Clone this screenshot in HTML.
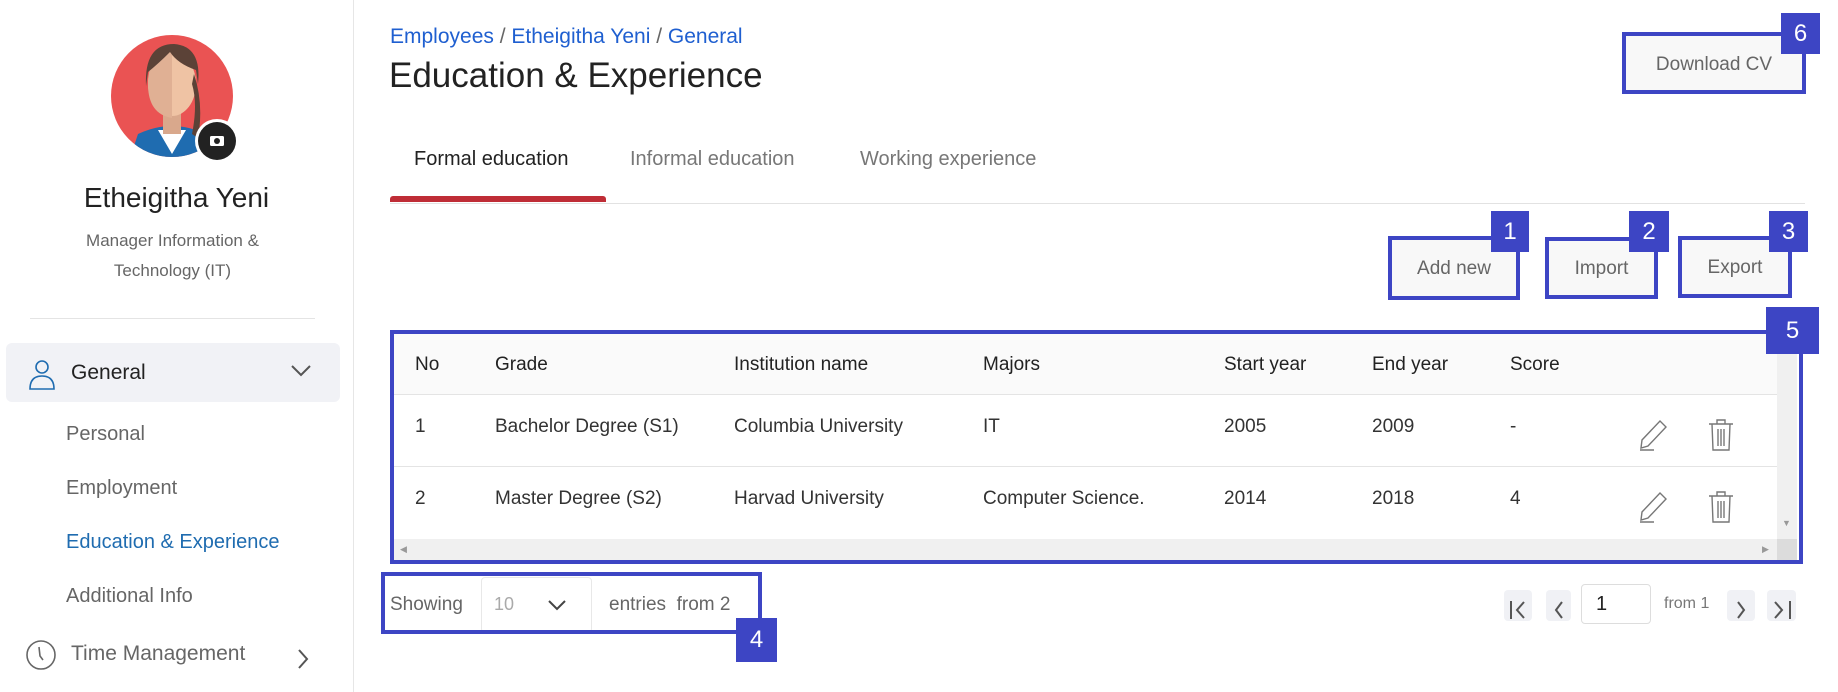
<!DOCTYPE html>
<html><head><meta charset="utf-8"><style>
*{box-sizing:border-box;margin:0;padding:0}
body{width:1838px;height:692px;background:#fff;font-family:"Liberation Sans",sans-serif;position:relative;overflow:hidden;color:#222}
.a{position:absolute;white-space:nowrap}
.box{position:absolute;border:4px solid #3d45c4}
.bd{position:absolute;background:#3d45c4;color:#fff;font-size:24px;text-align:center}
.btn{position:absolute;background:#f8f8f8;color:#666;font-size:19px;text-align:center}
.th{font-size:19px;color:#222;top:354px}
.td{font-size:19px;color:#333}
.nav{font-size:20px;color:#666;left:66px}
.pg{position:absolute;background:#f0f1f5;border-radius:4px}
</style></head><body>
<div class="a" style="left:353px;top:0;width:1px;height:692px;background:#e6e6e6"></div>
<svg class="a" style="left:108px;top:34px" width="140" height="140" viewBox="0 0 140 140">
<circle cx="64" cy="62" r="61" fill="#ea5353"/>
<clipPath id="c"><circle cx="64" cy="62" r="61"/></clipPath>
<g clip-path="url(#c)">
<path d="M20 130 L30 100 Q64 84 98 100 L108 130Z" fill="#1f6cb0"/>
<path d="M50 96 L64 120 L78 96 Z" fill="#fff"/>
<rect x="55" y="78" width="18" height="22" fill="#d9a88c"/>
<ellipse cx="64" cy="50" rx="24" ry="32" fill="#efc3a4"/>
<path d="M40 50 Q40 20 64 18 L64 84 Q40 80 40 50Z" fill="#e0b094"/>
<path d="M38 52 Q36 10 66 10 Q94 12 90 50 L88 36 Q70 30 62 18 Q50 30 40 38Z" fill="#5b4237"/>
<path d="M86 40 Q96 70 90 104 L84 100 Q90 70 84 50Z" fill="#5b4237"/>
</g>
<circle cx="109" cy="107" r="22" fill="#fff"/><circle cx="109" cy="107" r="19" fill="#222"/>
<rect x="102" y="102" width="14" height="10" rx="1.5" fill="#fff"/><circle cx="109" cy="107" r="3" fill="#222"/>
</svg>
<div class="a" style="left:0;width:353px;text-align:center;top:182px;font-size:28px;color:#222">Etheigitha Yeni</div>
<div class="a" style="left:0;width:345px;text-align:center;top:226px;font-size:17px;color:#666;line-height:30px">Manager Information &amp;<br>Technology (IT)</div>
<div class="a" style="left:30px;top:318px;width:285px;height:1px;background:#e4e4e4"></div>
<div class="a" style="left:6px;top:343px;width:334px;height:59px;background:#f1f2f6;border-radius:6px"></div>
<svg class="a" style="left:27px;top:359px" width="30" height="32" viewBox="0 0 30 32" fill="none" stroke="#1f6cb0" stroke-width="1.6"><circle cx="15" cy="8" r="6"/><path d="M3 30 Q3 17 15 17 Q27 17 27 30Z"/></svg>
<div class="a" style="left:71px;top:361px;font-size:21px;color:#222">General</div>
<svg class="a" style="left:290px;top:364px" width="22" height="14"><path d="M2 2 L11 11 L20 2" fill="none" stroke="#555" stroke-width="2"/></svg>
<div class="a nav" style="top:423px">Personal</div>
<div class="a nav" style="top:477px">Employment</div>
<div class="a nav" style="top:531px;color:#1f6cb0">Education &amp; Experience</div>
<div class="a nav" style="top:585px">Additional Info</div>
<svg class="a" style="left:25px;top:639px" width="32" height="32"><circle cx="16" cy="16" r="14" fill="none" stroke="#666" stroke-width="1.6"/><path d="M14 8 L15 17 L18 21" fill="none" stroke="#666" stroke-width="1.6"/></svg>
<div class="a" style="left:71px;top:642px;font-size:21px;color:#666">Time Management</div>
<svg class="a" style="left:296px;top:648px" width="14" height="22"><path d="M3 2 L11 11 L3 20" fill="none" stroke="#555" stroke-width="2"/></svg>
<div class="a" style="left:390px;top:25px;font-size:21px;color:#1f5fd0">Employees <span style="color:#666">/</span> Etheigitha Yeni <span style="color:#666">/</span> General</div>
<div class="a" style="left:389px;top:56px;font-size:35px;color:#222">Education &amp; Experience</div>
<div class="a" style="left:414px;top:148px;font-size:20px;color:#222">Formal education</div>
<div class="a" style="left:630px;top:148px;font-size:20px;color:#777">Informal education</div>
<div class="a" style="left:860px;top:148px;font-size:20px;color:#777">Working experience</div>
<div class="a" style="left:390px;top:203px;width:1415px;height:1px;background:#e2e2e2"></div>
<div class="a" style="left:390px;top:196px;width:216px;height:6px;background:#bf2d36;border-radius:3px 3px 0 0"></div>
<div class="btn" style="left:1622px;top:32px;width:184px;height:62px;line-height:66px">Download CV</div>
<div class="box" style="left:1622px;top:32px;width:184px;height:62px"></div>
<div class="bd" style="left:1781px;top:13px;width:39px;height:41px;line-height:41px">6</div>
<div class="btn" style="left:1388px;top:236px;width:132px;height:64px;line-height:66px">Add new</div>
<div class="box" style="left:1388px;top:236px;width:132px;height:64px"></div>
<div class="bd" style="left:1491px;top:211px;width:38px;height:41px;line-height:41px">1</div>
<div class="btn" style="left:1545px;top:237px;width:113px;height:62px;line-height:64px">Import</div>
<div class="box" style="left:1545px;top:237px;width:113px;height:62px"></div>
<div class="bd" style="left:1629px;top:211px;width:40px;height:41px;line-height:41px">2</div>
<div class="btn" style="left:1678px;top:236px;width:114px;height:62px;line-height:64px">Export</div>
<div class="box" style="left:1678px;top:236px;width:114px;height:62px"></div>
<div class="bd" style="left:1769px;top:211px;width:39px;height:41px;line-height:41px">3</div>
<div class="a" style="left:394px;top:334px;width:1383px;height:61px;background:#fafafa;border-bottom:1px solid #e4e4e4"></div>
<div class="a" style="left:394px;top:466px;width:1383px;height:1px;background:#e4e4e4"></div>
<div class="a th" style="left:415px">No</div><div class="a th" style="left:495px">Grade</div><div class="a th" style="left:734px">Institution name</div><div class="a th" style="left:983px">Majors</div><div class="a th" style="left:1224px">Start year</div><div class="a th" style="left:1372px">End year</div><div class="a th" style="left:1510px">Score</div>
<div class="a td" style="left:415px;top:416px">1</div><div class="a td" style="left:495px;top:416px">Bachelor Degree (S1)</div><div class="a td" style="left:734px;top:416px">Columbia University</div><div class="a td" style="left:983px;top:416px">IT</div><div class="a td" style="left:1224px;top:416px">2005</div><div class="a td" style="left:1372px;top:416px">2009</div><div class="a td" style="left:1510px;top:416px">-</div>
<div class="a td" style="left:415px;top:488px">2</div><div class="a td" style="left:495px;top:488px">Master Degree (S2)</div><div class="a td" style="left:734px;top:488px">Harvad University</div><div class="a td" style="left:983px;top:488px">Computer Science.</div><div class="a td" style="left:1224px;top:488px">2014</div><div class="a td" style="left:1372px;top:488px">2018</div><div class="a td" style="left:1510px;top:488px">4</div>
<svg class="a" style="left:1638px;top:418px" width="32" height="34"><path d="M3 30 L4 22 L22 3 L28 9 L10 28 Z M2 32 L16 32" fill="none" stroke="#777" stroke-width="1.4"/></svg>
<svg class="a" style="left:1706px;top:418px" width="30" height="36"><path d="M3 6 H27 M11 6 V2 H19 V6 M6 6 L7 32 H23 L24 6 M12 11 V28 M15 11 V28 M18 11 V28" fill="none" stroke="#777" stroke-width="1.4"/></svg>
<svg class="a" style="left:1638px;top:490px" width="32" height="34"><path d="M3 30 L4 22 L22 3 L28 9 L10 28 Z M2 32 L16 32" fill="none" stroke="#777" stroke-width="1.4"/></svg>
<svg class="a" style="left:1706px;top:490px" width="30" height="36"><path d="M3 6 H27 M11 6 V2 H19 V6 M6 6 L7 32 H23 L24 6 M12 11 V28 M15 11 V28 M18 11 V28" fill="none" stroke="#777" stroke-width="1.4"/></svg>
<div class="a" style="left:394px;top:539px;width:1383px;height:21px;background:#f0f0f0"></div>
<div class="a" style="left:1777px;top:334px;width:20px;height:226px;background:#f0f0f0"></div>
<div class="a" style="left:1777px;top:539px;width:20px;height:21px;background:#dcdcdc"></div>
<div class="a" style="left:400px;top:544px;font-size:9px;color:#999">◀</div>
<div class="a" style="left:1762px;top:544px;font-size:9px;color:#999">▶</div>
<div class="a" style="left:1782px;top:518px;font-size:9px;color:#999">▼</div>
<div class="box" style="left:390px;top:330px;width:1413px;height:234px"></div>
<div class="bd" style="left:1766px;top:307px;width:53px;height:47px;line-height:47px">5</div>
<div class="a" style="left:390px;top:594px;font-size:19px;color:#666">Showing</div>
<div class="a" style="left:481px;top:577px;width:111px;height:56px;border:1px solid #e8e8e8;border-radius:4px"></div>
<div class="a" style="left:494px;top:594px;font-size:18px;color:#aaa">10</div>
<svg class="a" style="left:547px;top:599px" width="20" height="13"><path d="M2 2 L10 10 L18 2" fill="none" stroke="#444" stroke-width="2"/></svg>
<div class="a" style="left:609px;top:594px;font-size:19px;color:#666">entries&nbsp; from 2</div>
<div class="box" style="left:381px;top:572px;width:381px;height:62px"></div>
<div class="bd" style="left:736px;top:618px;width:41px;height:44px;line-height:44px">4</div>
<div class="pg" style="left:1504px;top:590px;width:28px;height:31px"></div>
<div class="pg" style="left:1546px;top:590px;width:25px;height:31px"></div>
<div class="pg" style="left:1727px;top:590px;width:28px;height:31px"></div>
<div class="pg" style="left:1767px;top:590px;width:29px;height:31px"></div>
<svg class="a" style="left:1508px;top:599px" width="22" height="22"><path d="M3 2 V20 M16 3 L9 11 L16 19" fill="none" stroke="#555" stroke-width="2"/></svg>
<svg class="a" style="left:1550px;top:599px" width="18" height="22"><path d="M12 3 L6 11 L12 19" fill="none" stroke="#555" stroke-width="2"/></svg>
<div class="a" style="left:1581px;top:584px;width:70px;height:40px;border:1px solid #ddd;border-radius:4px;background:#fff"></div>
<div class="a" style="left:1596px;top:593px;font-size:20px;color:#222">1</div>
<div class="a" style="left:1664px;top:595px;font-size:16px;color:#777">from 1</div>
<svg class="a" style="left:1732px;top:599px" width="18" height="22"><path d="M6 3 L12 11 L6 19" fill="none" stroke="#555" stroke-width="2"/></svg>
<svg class="a" style="left:1772px;top:599px" width="22" height="22"><path d="M3 3 L10 11 L3 19 M18 2 V20" fill="none" stroke="#555" stroke-width="2"/></svg>
</body></html>
